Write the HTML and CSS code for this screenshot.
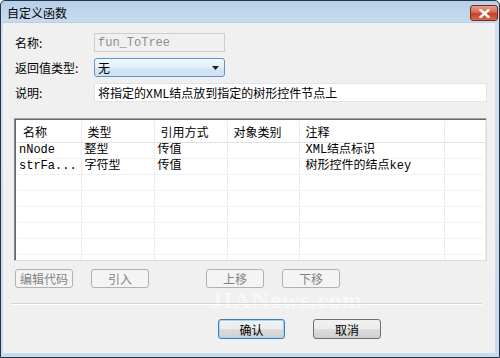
FILE: index.html
```html
<!DOCTYPE html>
<html lang="zh-CN">
<head>
    <meta charset="UTF-8">
    <title>自定义函数</title>
    <link rel="stylesheet" href="styles.css">
</head>
<body>
    <div class="window">
        <div class="titlebar">
            <span class="title">自定义函数</span>
            <button type="button" class="close-btn">
                <svg width="11" height="9" viewBox="0 0 11 9"><path d="M1.5 1 L9.5 8 M9.5 1 L1.5 8" stroke="#fff" stroke-width="2.4" stroke-linecap="square"/></svg>
            </button>
        </div>
        <div class="dialog">
            <div class="fields">
                <label>名称:</label>
                <input type="text" class="field disabled" value="fun_ToTree" disabled>
                <label>返回值类型:</label>
                <div class="select">
                    <span>无</span>
                    <svg width="7" height="4" viewBox="0 0 7 4"><path d="M0 0 H7 L3.5 4 Z" fill="#222"/></svg>
                </div>
                <label>说明:</label>
                <input type="text" class="field wide" value="将指定的XML结点放到指定的树形控件节点上">
            </div>

            <div class="list">
                <table>
                    <colgroup>
                        <col style="width:64px"><col style="width:73px"><col style="width:73px"><col style="width:72px"><col style="width:145px"><col>
                    </colgroup>
                    <thead>
                        <tr><th>名称</th><th>类型</th><th>引用方式</th><th>对象类别</th><th>注释</th><th></th></tr>
                    </thead>
                    <tbody>
                        <tr><td class="name">nNode</td><td>整型</td><td>传值</td><td></td><td class="note">XML结点标识</td><td></td></tr>
                        <tr><td class="name">strFa...</td><td>字符型</td><td>传值</td><td></td><td class="note">树形控件的结点key</td><td></td></tr>
                        <tr><td></td><td></td><td></td><td></td><td></td><td></td></tr>
                        <tr><td></td><td></td><td></td><td></td><td></td><td></td></tr>
                        <tr><td></td><td></td><td></td><td></td><td></td><td></td></tr>
                        <tr><td></td><td></td><td></td><td></td><td></td><td></td></tr>
                        <tr><td></td><td></td><td></td><td></td><td></td><td></td></tr>
                        <tr class="last"><td></td><td></td><td></td><td></td><td></td><td></td></tr>
                    </tbody>
                </table>
            </div>

            <div class="tools">
                <span class="watermark">JIANews.com</span>
                <button type="button" class="btn" disabled>编辑代码</button>
                <button type="button" class="btn" disabled>引入</button>
                <button type="button" class="btn push" disabled>上移</button>
                <button type="button" class="btn" disabled>下移</button>
            </div>

            <div class="separator"></div>

            <div class="actions">
                <button type="button" class="btn main default">确认</button>
                <button type="button" class="btn main">取消</button>
            </div>
        </div>
    </div>
</body>
</html>
```

FILE: styles.css
```css
html, body {
    margin: 0;
    padding: 0;
}
body {
    font-family: "Liberation Mono", "Noto Sans CJK SC", monospace;
    font-size: 12px;
    color: #000;
    background: #fff;
}
.window {
    width: 500px;
    height: 358px;
    box-sizing: border-box;
    border: 1px solid #253547;
    border-radius: 5px 5px 0 0;
    background: linear-gradient(#b7cfe8, #cfe0f1 30px, #c9dcef);
    display: flex;
    flex-direction: column;
    padding: 0 4px 4px 2px;
    overflow: hidden;
}
.titlebar {
    height: 21px;
    flex: none;
    display: flex;
    align-items: center;
    justify-content: space-between;
    padding-left: 4px;
}
.title {
    font-family: "Noto Sans CJK SC", sans-serif;
    font-size: 12px;
    line-height: 14px;
    margin-top: 3px;
}
.close-btn {
    width: 28px;
    height: 16px;
    margin: 3px -3px 0 0;
    padding: 0;
    border: 1px solid #7a2a1c;
    border-radius: 3px;
    background: linear-gradient(#e7a08f, #d46a52 45%, #c3402a 55%, #d76a4c);
    display: flex;
    align-items: center;
    justify-content: center;
}
.dialog {
    flex: 1;
    background: #f0f0f0;
    border-top: 1px solid #bcd0e4;
    display: flex;
    flex-direction: column;
    padding: 10px 8px 0 11px;
    position: relative;
}
.fields {
    display: grid;
    grid-template-columns: 79px 1fr;
    row-gap: 6px;
    align-items: center;
    padding-left: 1px;
}
.fields label {
    font-family: "Noto Sans CJK SC", sans-serif;
    line-height: 19px;
}
.field {
    height: 19px;
    box-sizing: border-box;
    border: 1px solid #abadb3;
    border-top-color: #e3e3e3;
    background: #fff;
    font: inherit;
    padding: 0 3px;
    margin: 0;
}
.field.disabled {
    width: 131px;
    background: #f0f0f0;
    color: #8e8e8e;
    border-color: #cdcdcd;
}
.field.wide {
    width: 393px;
    font-family: "Noto Sans CJK SC", sans-serif;
    border-color: #e3e3e3;
}
.select {
    width: 131px;
    height: 19px;
    box-sizing: border-box;
    border: 1px solid #5e96c8;
    border-radius: 3px;
    background: linear-gradient(#f4f9fd, #e2eef8 50%, #d4e6f4 51%, #cfe2f2);
    display: flex;
    align-items: center;
    justify-content: space-between;
    padding: 0 5px 0 3px;
    font-family: "Noto Sans CJK SC", sans-serif;
}
.list {
    margin-top: 16px;
    width: 473px;
    height: 143px;
    box-sizing: border-box;
    border: 1px solid #828790;
    border-top-color: #a0a0a0;
    border-right-color: #dcdcdc;
    border-bottom-color: #dcdcdc;
    box-shadow: inset 1px 1px 0 #696969;
    background: #fff;
    padding: 2px 0 0 2px;
    overflow: hidden;
}
.list table {
    border-collapse: collapse;
    table-layout: fixed;
    width: 469px;
}
.list th {
    font-weight: normal;
    text-align: left;
    height: 21px;
    padding: 0 0 0 6px;
    border-right: 1px solid #ececec;
    border-bottom: 1px solid #e2e2e2;
    font-family: "Noto Sans CJK SC", sans-serif;
    white-space: nowrap;
}
.list td {
    height: 15px;
    line-height: 15px;
    padding: 0 0 0 3px;
    border-right: 1px solid #ececec;
    border-bottom: 1px solid #f2f2f2;
    white-space: nowrap;
    overflow: hidden;
}
.list td.name {
    padding-left: 2px;
}
.list td.note {
    padding-left: 6px;
}
.tools {
    margin-top: 8px;
    display: flex;
    gap: 18px;
    position: relative;
    padding-left: 1px;
}
.btn {
    font-family: "Noto Sans CJK SC", sans-serif;
    font-size: 12px;
    width: 58px;
    height: 19px;
    padding: 0;
    margin: 0;
    border: 1px solid #adb2b5;
    border-radius: 3px;
    background: #f4f4f4;
    color: #838383;
    line-height: 15px;
    position: relative;
}
.btn.push {
    margin-left: 39px;
}
.watermark {
    position: absolute;
    left: 196px;
    top: 20px;
    font-family: "Liberation Serif", serif;
    font-weight: bold;
    font-size: 24px;
    line-height: 22px;
    letter-spacing: 1px;
    color: #f8f8f8;
    pointer-events: none;
}
.separator {
    margin: 15px 5px 0 -3px;
    border-top: 1px solid #d5d5d5;
    border-bottom: 1px solid #fff;
    position: relative;
}
.actions {
    margin-top: 14px;
    display: flex;
    gap: 28px;
    padding-left: 204px;
}
.btn.main {
    width: 68px;
    height: 20px;
    border: 1px solid #707070;
    background: linear-gradient(#f2f2f2, #ebebeb 50%, #dddddd 51%, #cfcfcf);
    color: #000;
}
.btn.default {
    width: 67px;
    border-color: #3c7fb1;
    box-shadow: inset 0 0 0 1px #9ed7f5;
}
```
